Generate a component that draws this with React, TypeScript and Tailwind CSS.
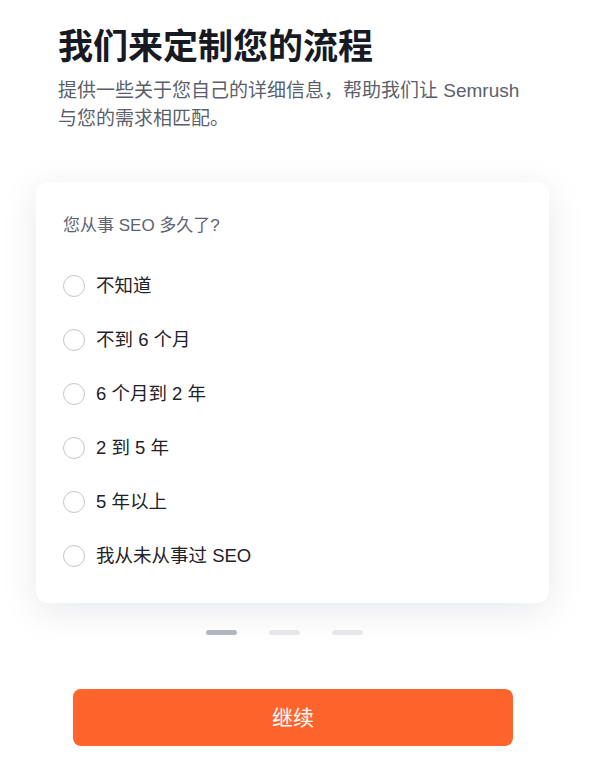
import React from "react";

const options = ["不知道", "不到 6 个月", "6 个月到 2 年", "2 到 5 年", "5 年以上", "我从未从事过 SEO"];

export default function App() {
  return (
    <div
      className="min-h-[771px] w-[607px] bg-white pt-[27px]"
      style={{ fontFamily: '"Liberation Sans", "Noto Sans CJK SC", sans-serif' }}
    >
      <div className="px-[58px]">
        <h1 className="text-[35px] font-bold leading-[40px] text-[#171a22]">我们来定制您的流程</h1>
        <p className="mt-[10px] w-[470px] text-[19px] leading-[28px] text-[#5b5f6b]">
          提供一些关于您自己的详细信息，帮助我们让 Semrush 与您的需求相匹配。
        </p>
      </div>

      <div className="ml-[36px] mt-[49px] w-[513px] rounded-[12px] bg-white px-[27px] pb-[20px] pt-[32px] shadow-[0_8px_36px_rgba(30,40,70,0.10)]">
        <div className="text-[17px] leading-[24px] text-[#5f6270]">您从事 SEO 多久了?</div>
        <div className="mt-[21px] flex flex-col">
          {options.map((o) => (
            <label key={o} className="flex h-[54px] items-center gap-[11px]">
              <span className="h-[22px] w-[22px] rounded-full border border-[#c4c6cf] bg-white" />
              <span className="text-[18.5px] leading-[24px] text-[#1f2128]">{o}</span>
            </label>
          ))}
        </div>
      </div>

      <div className="ml-[206px] mt-[27px] flex gap-[32px]">
        <span className="h-[5px] w-[31px] rounded-full bg-[#b3b6c1]" />
        <span className="h-[5px] w-[31px] rounded-full bg-[#e6e7eb]" />
        <span className="h-[5px] w-[31px] rounded-full bg-[#e6e7eb]" />
      </div>

      <button className="ml-[73px] mt-[54px] flex h-[57px] w-[440px] items-center justify-center rounded-[8px] bg-[#ff642d] text-[21px] text-white">
        继续
      </button>
    </div>
  );
}
